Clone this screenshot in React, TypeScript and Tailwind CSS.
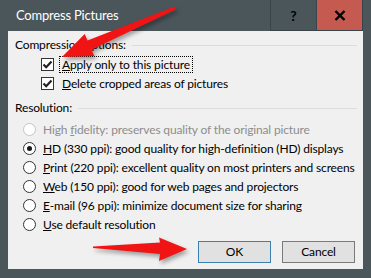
import React from "react";

const font = "font-['Segoe_UI','Lato',sans-serif]";

function CheckBox() {
  return (
    <span className="flex h-[13px] w-[13px] shrink-0 items-center justify-center border border-[#333] bg-white">
      <svg width="11" height="11" viewBox="0 0 11 11">
        <polyline points="1.5,5.5 4.2,8.2 9.5,2.5" fill="none" stroke="#222" strokeWidth="2.2" />
      </svg>
    </span>
  );
}

function Radio({ on, disabled }: { on?: boolean; disabled?: boolean }) {
  return (
    <span
      className={
        "flex h-[13px] w-[13px] shrink-0 items-center justify-center rounded-full border bg-white " +
        (disabled ? "border-[#c4c4c4]" : "border-[#333]")
      }
    >
      {on && <span className="h-[5px] w-[5px] rounded-full bg-[#1a1a1a]" />}
    </span>
  );
}

function Heading({ children }: { children: React.ReactNode }) {
  return (
    <div className="flex h-[18px] items-center pl-[7px] pr-[6px]">
      <span className="whitespace-nowrap">{children}</span>
      <span className="ml-[6px] h-px flex-1 bg-[#dcdcdc]" />
    </div>
  );
}

const radios: { key: string; rest: string; on?: boolean; disabled?: boolean; pre?: string }[] = [
  { pre: "High ", key: "f", rest: "idelity: preserves quality of the original picture", disabled: true },
  { key: "H", rest: "D (330 ppi): good quality for high-definition (HD) displays", on: true },
  { key: "P", rest: "rint (220 ppi): excellent quality on most printers and screens" },
  { key: "W", rest: "eb (150 ppi): good for web pages and projectors" },
  { key: "E", rest: "-mail (96 ppi): minimize document size for sharing" },
  { key: "U", rest: "se default resolution" },
];

export default function App() {
  return (
    <div className={"relative flex h-[278px] w-[371px] flex-col bg-[#4b565b] text-[12px] tracking-[-0.15px] text-black " + font}>
      {/* title bar */}
      <div className="flex h-[31px] items-stretch pl-[16px] pr-[8px]">
        <div className="flex flex-1 items-center text-[13px] tracking-[-0.2px] text-white">Compress Pictures</div>
        <div className="flex w-[47px] items-center justify-center border-x border-b border-[#3a4347] text-[14px] font-bold">?</div>
        <div className="flex w-[46px] items-center justify-center border-b border-r border-[#3a4347] bg-[#c45a50]">
          <svg width="12" height="11" viewBox="0 0 12 11">
            <path d="M1.5 1 L10.5 10 M10.5 1 L1.5 10" stroke="#000" strokeWidth="2.4" />
          </svg>
        </div>
      </div>

      {/* client area */}
      <div className="mx-[8px] mb-[9px] flex flex-1 flex-col bg-[#f0f0f0] pt-[5px]">
        <Heading>Compression options:</Heading>
        <div className="mt-px flex h-[19px] items-center pl-[33px]">
          <CheckBox />
          <span className="ml-[5px] whitespace-nowrap border border-dotted border-black px-[2px] leading-[15px]">
            <u>A</u>pply only to this picture
          </span>
        </div>
        <div className="flex h-[19px] items-center pl-[33px]">
          <CheckBox />
          <span className="ml-[8px] whitespace-nowrap">
            <u>D</u>elete cropped areas of pictures
          </span>
        </div>

        <div className="mt-[6px]">
          <Heading>Resolution:</Heading>
        </div>
        <div className="mt-[3px] flex flex-col">
          {radios.map((r) => (
            <div key={r.key} className="flex h-[19px] items-center pl-[15px]">
              <Radio on={r.on} disabled={r.disabled} />
              <span className={"ml-[7px] whitespace-nowrap " + (r.disabled ? "text-[#8d8d8d]" : "")}>
                {r.pre}
                <u>{r.key}</u>
                {r.rest}
              </span>
            </div>
          ))}
        </div>

        <div className="mt-[7px] flex justify-end gap-[11px] pr-[8px]">
          <button className="h-[22px] w-[73px] border border-[#3c7fb1] bg-[#e1e1e1]">OK</button>
          <button className="h-[22px] w-[73px] border border-[#7a7a7a] bg-[#e1e1e1]">Cancel</button>
        </div>
      </div>

      {/* annotation arrows */}
      <svg
        className="pointer-events-none absolute left-0 top-0 drop-shadow-[2px_3px_2px_rgba(0,0,0,0.35)]"
        width="371"
        height="278"
        viewBox="0 0 371 278"
      >
        <polygon
          points="174.4,6.6 87.5,40.5 84.7,34.1 62,57 94.3,56.1 91.5,49.7 175.6,9.4"
          fill="#f01414"
        />
        <polygon points="93,246.5 160,242.5 159,237.5 187,249 159,261 160,254 93,248" fill="#f01414" />
      </svg>
    </div>
  );
}
